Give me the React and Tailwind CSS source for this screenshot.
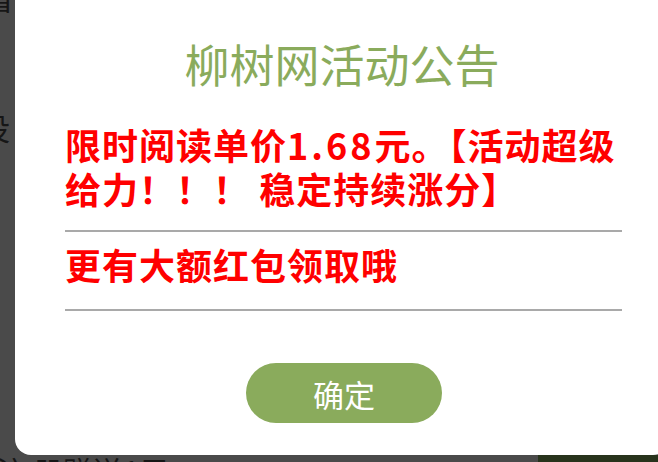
export default function App() {
  return (
    <div
      className="relative w-[658px] h-[462px] overflow-hidden bg-[#4a4a4a]"
      style={{ fontFamily: '"Noto Sans CJK SC", "Noto Sans", sans-serif' }}
    >
      {/* page underneath the overlay */}
      <div className="absolute inset-0 flex flex-col text-[#161616]">
        <div className="-mt-[18px] ml-[-16px] text-[30px] leading-none">省</div>
        <div className="mt-[100px] ml-[-20px] text-[30px] leading-none">没</div>
        <div className="mt-auto flex items-start h-[7px] overflow-visible">
          <div className="ml-[-4px] text-[30px] leading-[30px] whitespace-nowrap">注 册赠送1元</div>
          <div className="ml-auto w-[120px] h-[7px] bg-[#28331c]" />
        </div>
      </div>

      {/* dialog */}
      <div className="absolute left-[15px] top-[-20px] w-[654px] h-[475px] rounded-[16px] bg-white flex flex-col">
        <h1 className="pt-[61px] text-center text-[45px] leading-none font-normal text-[#8aab5c]">
          柳树网活动公告
        </h1>

        <div className="mt-[36px] pl-[50px] pr-[47px] flex flex-col text-[#ff0000] font-bold text-[36px] leading-[44px] tracking-[1px]">
          <p className="pb-[20px] whitespace-nowrap">
            限时阅读单价<span className="tracking-[3px]">1.68</span>元。【活动超级
            <br />
            给力！！！ 稳定持续涨分】
          </p>
          <div className="h-[2px] bg-[#a9a9a9]" />
          <p className="pt-[10px] pb-[23px] whitespace-nowrap">更有大额红包领取哦</p>
          <div className="h-[2px] bg-[#a9a9a9]" />
        </div>

        <div className="mt-[52px] flex justify-center pl-[4px]">
          <button className="w-[196px] h-[60px] rounded-full bg-[#8aab5c] text-white text-[31px] leading-none">
            确定
          </button>
        </div>
      </div>
    </div>
  );
}
